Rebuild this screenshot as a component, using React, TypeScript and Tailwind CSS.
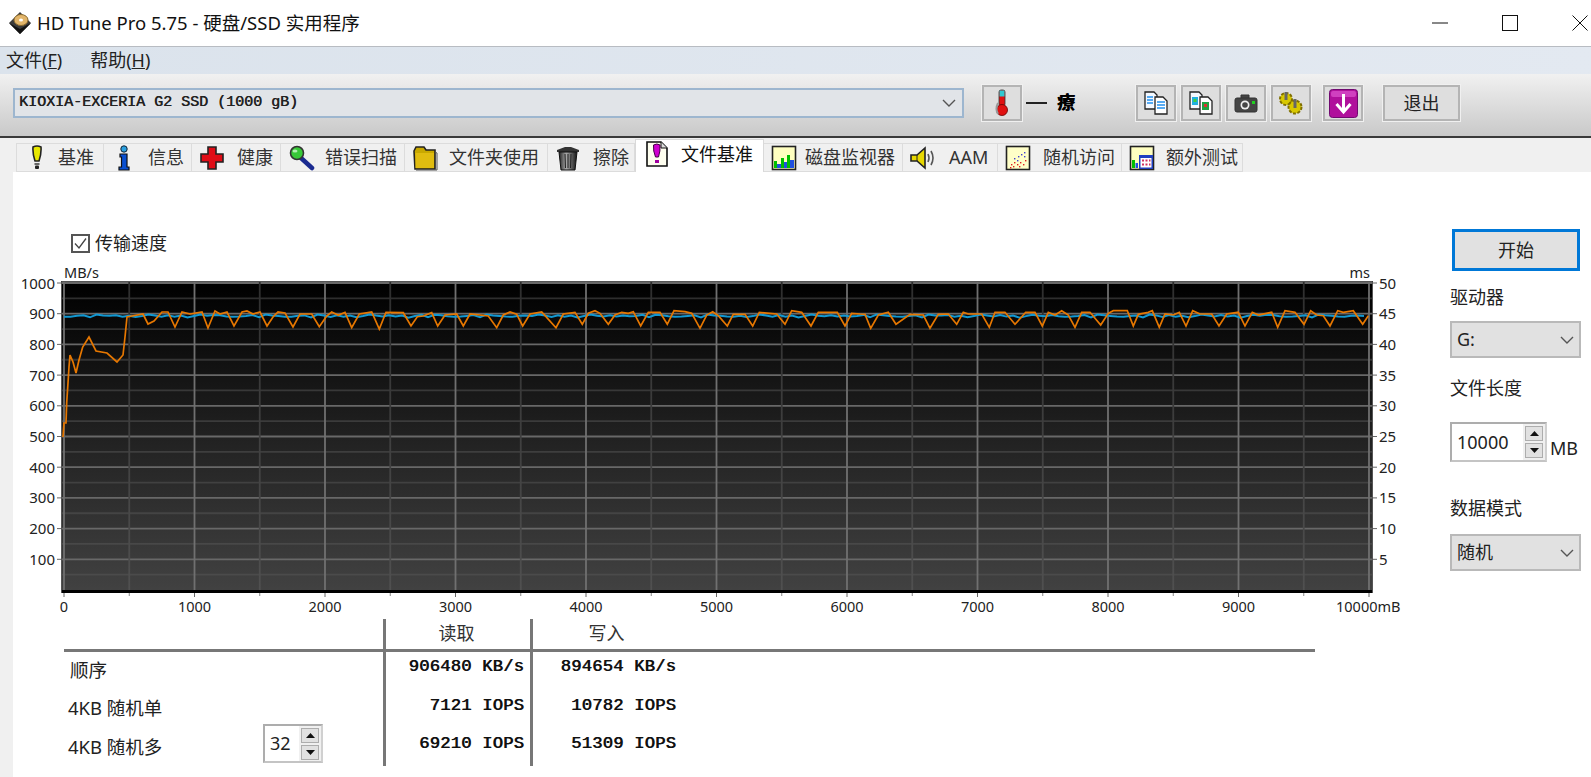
import React from "react";

const sans = "[font-family:'Noto_Sans','Noto_Sans_CJK_SC',sans-serif]";
const FONT = "'Noto Sans','Noto Sans CJK SC',sans-serif";

const Hdd = () => (
  <svg width="24" height="24" viewBox="0 0 24 24">
    <path d="M12 1 L23 12 L12 23 L1 12 Z" fill="#3a3a3a" />
    <path d="M1 12 L12 23 L23 12 L12 18 Z" fill="#111" />
    <ellipse cx="13" cy="9" rx="7" ry="5.5" fill="#e2b56a" stroke="#8a6a30" />
    <ellipse cx="13" cy="9" rx="2" ry="1.5" fill="#fff" />
  </svg>
);
const Bulb = () => (
  <svg width="24" height="26" viewBox="0 0 24 26">
    <path d="M8 2 Q12 0 16 2 Q16.5 9 14 16 L10 16 Q7.5 9 8 2 Z" fill="#e8e800" stroke="#222" strokeWidth="1.6" />
    <rect x="9.5" y="18" width="5" height="2" fill="#666" />
    <rect x="10" y="20.5" width="4" height="3.5" rx="1" fill="#222" />
  </svg>
);
const Info = () => (
  <svg width="24" height="26" viewBox="0 0 24 26">
    <circle cx="12" cy="4" r="3.2" fill="#2aa0e0" stroke="#123" strokeWidth="1" />
    <path d="M8 9 H15 V22 H17 V25 H7 V22 H9.5 V12 H8 Z" fill="#0a4fd0" stroke="#111" strokeWidth="1.2" />
  </svg>
);
const Cross = () => (
  <svg width="26" height="26" viewBox="0 0 26 26">
    <path d="M9 2 H17 V9 H24 V17 H17 V24 H9 V17 H2 V9 H9 Z" fill="#e00c16" stroke="#222" strokeWidth="1.6" />
  </svg>
);
const Lens = () => (
  <svg width="28" height="26" viewBox="0 0 28 26">
    <path d="M14 13 L25 23" stroke="#1a2a90" strokeWidth="4.5" strokeLinecap="round" />
    <circle cx="10" cy="8" r="6.5" fill="#38c838" stroke="#333" strokeWidth="1.6" />
    <ellipse cx="8" cy="6" rx="2.5" ry="1.6" fill="#b0f0b0" />
  </svg>
);
const Folder = () => (
  <svg width="26" height="26" viewBox="0 0 26 26">
    <path d="M2 6 L4 2 H12 L14 5 H23 V24 H3 Z" fill="#c8a800" stroke="#222" strokeWidth="1.6" />
    <rect x="3.5" y="8" width="18.5" height="15" fill="#e0bc10" />
    <path d="M23 7 L25 8 V25 L4 25" fill="none" stroke="#555" strokeWidth="1" />
  </svg>
);
const Trash = () => (
  <svg width="24" height="26" viewBox="0 0 24 26">
    <defs>
      <linearGradient id="tr" x1="0" x2="1">
        <stop offset="0" stopColor="#222" />
        <stop offset=".4" stopColor="#aaa" />
        <stop offset="1" stopColor="#111" />
      </linearGradient>
    </defs>
    <path d="M1 5 L9 2 H15 L23 5 V7 H1 Z" fill="#333" />
    <path d="M3 7 H21 L19 25 H5 Z" fill="url(#tr)" stroke="#111" />
    <path d="M9 9 L9.5 23 M12 9 V23 M15 9 L14.5 23" stroke="#222" strokeWidth="1" />
  </svg>
);
const FileBench = () => (
  <svg width="24" height="28" viewBox="0 0 24 28">
    <path d="M2 2 H16 L22 8 V26 H2 Z" fill="#fffff0" stroke="#111" strokeWidth="1.6" />
    <path d="M16 2 V8 H22" fill="#ddd" stroke="#111" strokeWidth="1" />
    <path d="M8.5 5 Q12 3 15 5 Q15.5 11 13.5 17 H10.5 Q8 11 8.5 5 Z" fill="#d000d0" stroke="#404" strokeWidth="1" />
    <rect x="10" y="20" width="4" height="3" fill="#a000a0" />
  </svg>
);
const ChartIcon = () => (
  <svg width="26" height="26" viewBox="0 0 26 26">
    <rect x="1.5" y="1.5" width="23" height="23" fill="#ffffc0" stroke="#222" strokeWidth="1.6" />
    <path d="M3 23 V16 H6 V23 Z M10 23 V13 H13 V23 Z M16 23 V10 H19 V23 Z" fill="#00c000" />
    <path d="M6 23 V19 H10 V23 Z M13 23 V17 H16 V23 Z M19 23 V15 H23 V23 Z" fill="#2050e0" />
  </svg>
);
const Speaker = () => (
  <svg width="26" height="24" viewBox="0 0 26 24">
    <path d="M1 9 H7 L15 2 V22 L7 15 H1 Z" fill="#e8d800" stroke="#222" strokeWidth="1.6" />
    <path d="M7 9 V15" stroke="#222" strokeWidth="1" />
    <path d="M18 8 Q20 12 18 16 M21 5 Q25 12 21 19" fill="none" stroke="#555" strokeWidth="1.6" />
  </svg>
);
const Scatter = () => {
  const red = [[6,19],[9,17],[12,19],[8,21],[15,17],[18,19],[20,15],[14,21],[5,22]];
  const blue = [[9,13],[13,11],[16,9],[19,7],[12,15],[19,11]];
  return (
    <svg width="26" height="26" viewBox="0 0 26 26">
      <rect x="1.5" y="1.5" width="23" height="23" fill="#ffffc8" stroke="#222" strokeWidth="1.6" />
      {red.map(([x, y], i) => <rect key={i} x={x} y={y} width="1.4" height="1.4" fill="#e02020" />)}
      {blue.map(([x, y], i) => <rect key={i} x={x} y={y} width="1.4" height="1.4" fill="#4040d0" />)}
    </svg>
  );
};
const Extra = () => (
  <svg width="26" height="26" viewBox="0 0 26 26">
    <rect x="1.5" y="1.5" width="23" height="23" fill="#ffffc0" stroke="#222" strokeWidth="1.6" />
    <path d="M3 23 V15 H6 V23 Z" fill="#00c000" />
    <path d="M6.5 23 V18 H9 V23 Z" fill="#2050e0" />
    <rect x="10" y="10" width="14" height="14" fill="#2040c0" />
    <rect x="11.5" y="13" width="11" height="9.5" fill="#fff" />
    <path d="M13 14.5 h2 v2 h-2 Z M16.5 14.5 h2 v2 h-2 Z M20 14.5 h1.5 v2 h-1.5 Z M13 18.5 h2 v2 h-2 Z M16.5 18.5 h2 v2 h-2 Z M20 18.5 h1.5 v2 h-1.5 Z" fill="#d03060" />
  </svg>
);

const Thermo = () => (
  <svg width="18" height="28" viewBox="0 0 18 28">
    <rect x="6" y="1" width="6" height="16" rx="2" fill="#e01010" stroke="#333" strokeWidth=".8" />
    <rect x="6.5" y="1.5" width="5" height="6" fill="#30c8d0" />
    <circle cx="9" cy="21" r="5.5" fill="#e01010" stroke="#600" strokeWidth=".8" />
    <path d="M5 14 Q2 20 5 25" stroke="#999" strokeWidth="2" fill="none" />
  </svg>
);
const Pages = ({ color }: { color?: boolean }) => (
  <svg width="26" height="24" viewBox="0 0 26 24">
    <path d="M2 1 H11 L14 4 V18 H2 Z" fill="#f4f8ff" stroke="#222" strokeWidth="1.3" />
    <path d="M12 6 H20 L24 10 V23 H12 Z" fill="#fff" stroke="#222" strokeWidth="1.3" />
    {color ? (
      <>
        <rect x="4" y="6" width="6" height="8" fill="#20b0e0" />
        <rect x="5.5" y="8" width="3" height="3" fill="#40d040" />
        <rect x="14" y="11" width="7" height="8" fill="#20a040" />
        <rect x="16" y="13" width="3" height="3" fill="#e03030" />
      </>
    ) : (
      <path d="M4 6 H10 M4 9 H10 M4 12 H10 M14 11 H22 M14 14 H22 M14 17 H22" stroke="#2090f0" strokeWidth="1.6" />
    )}
  </svg>
);
const Camera = () => (
  <svg width="24" height="20" viewBox="0 0 24 20">
    <path d="M7 5 V2 H15 V5 M1 7 Q1 5 3 5 H21 Q23 5 23 7 V17 Q23 19 21 19 H3 Q1 19 1 17 Z" fill="#444" stroke="#333" />
    <circle cx="11" cy="12" r="4.5" fill="#eee" />
    <circle cx="11" cy="12" r="2.8" fill="#444" />
    <rect x="18" y="8" width="3" height="3" fill="#20d020" />
  </svg>
);
const Gears = () => (
  <svg width="26" height="24" viewBox="0 0 26 24">
    <circle cx="8" cy="8" r="6" fill="#d8c800" stroke="#807000" strokeWidth="2" strokeDasharray="3 1.5" />
    <circle cx="17" cy="16" r="6.5" fill="#d8c800" stroke="#807000" strokeWidth="2" strokeDasharray="3 1.5" />
    <path d="M8 1 V9 M17 8 V17" stroke="#666" strokeWidth="3" />
  </svg>
);
const Download = () => (
  <svg width="29" height="29" viewBox="0 0 29 29">
    <rect x=".5" y=".5" width="28" height="28" rx="3" fill="#b0109c" stroke="#700a70" />
    <rect x="2" y="2" width="25" height="6" rx="2" fill="#d040c0" />
    <path d="M14.5 5 V22 M7.5 15 L14.5 23 L21.5 15" fill="none" stroke="#fff" strokeWidth="3" />
  </svg>
);

const Chevron = () => (
  <svg width="14" height="8" viewBox="0 0 14 8">
    <path d="M1 1 L7 7 L13 1" fill="none" stroke="#555" strokeWidth="1.4" />
  </svg>
);

const ToolBtn = ({ children, cls }: { children: React.ReactNode; cls: string }) => (
  <div className={`h-9 flex items-center justify-center bg-[#dedede] border-2 border-[#b4b4b4] shadow-[0_0_0_1px_#f0f0f0] ${cls}`}>
    {children}
  </div>
);

const tabs = [
  { label: "基准", w: "w-[88px]", ml: "ml-[1px]", icon: <Bulb /> },
  { label: "信息", w: "w-[88px]", ml: "ml-[4px]", icon: <Info /> },
  { label: "健康", w: "w-[89px]", ml: "ml-[5px]", icon: <Cross /> },
  { label: "错误扫描", w: "w-[124px]", ml: "ml-[4px]", icon: <Lens /> },
  { label: "文件夹使用", w: "w-[143px]", ml: "ml-[4px]", icon: <Folder /> },
  { label: "擦除", w: "w-[87px]", ml: "ml-[5px]", icon: <Trash /> },
  { label: "文件基准", w: "w-[129px]", ml: "ml-[3px]", icon: <FileBench />, active: true },
  { label: "磁盘监视器", w: "w-[139px]", ml: "ml-[1px]", icon: <ChartIcon /> },
  { label: "AAM", w: "w-[95px]", ml: "ml-[6px]", icon: <Speaker /> },
  { label: "随机访问", w: "w-[124px]", ml: "ml-[5px]", icon: <Scatter /> },
  { label: "额外测试", w: "w-[121px]", ml: "ml-[4px]", icon: <Extra /> },
];

const seg = (bx: number, by: number, s: number[][]) => s.map(([x, y]) => [bx + x / 3, by + y / 3]);

const orangePts = [
  ...[[63,437],[64,423],[66,423],[66.7,403],[68,383],[69,367],[70,355],[73,362],[76,373],[79,360],[82.7,347],[89,337],[96,351],[107,353],[117,362],[123,355],[125,337],[127,317],[143,314],[148,324],[154,321],[162,312],[168,312],[175,327],[182,312],[190,314],[202,312],[208,328],[215,311],[220,314],[227,312],[234,326],[242,312],[247,311],[253,314],[260,312],[267,326],[273,317],[278,312],[285,313],[293,327]],
  ...seg(300, 280, [[0,102],[35,102],[58,140],[80,108],[95,96],[115,106],[135,97],[155,143],[178,102],[215,96],[238,147],[258,97],[310,98],[333,138],[352,110],[370,108],[395,98],[413,138],[435,105],[470,102],[490,138],[510,102],[565,108],[590,143],[610,105],[630,96],[650,103],[668,138],[690,102],[725,96],[768,143],[790,102],[825,97],[847,133],[865,100],[885,92]]),
  ...seg(600, 295, [[0,55],[25,88],[45,60],[65,52],[85,55],[100,50],[122,93],[145,52],[180,52],[202,88],[222,47],[255,50],[275,55],[300,100],[320,60],[338,50],[355,62],[382,93],[400,58],[435,58],[458,93],[478,52],[530,57],[555,88],[575,47],[605,52],[633,93],[655,52],[712,52],[735,93],[755,55]]),
  ...seg(860, 295, [[0,57],[15,58],[32,100],[55,60],[85,52],[108,88],[150,58],[190,60],[210,100],[235,58],[265,57],[290,88],[310,52],[325,57],[365,57],[388,97],[405,52],[435,52],[465,88],[497,52],[525,52],[547,93],[565,52],[585,60],[605,47],[625,60],[645,97],[665,52],[690,52],[722,90],[745,55],[760,47]]),
  ...seg(1120, 295, [[0,47],[22,47],[40,93],[55,58],[85,52],[97,47],[118,97],[135,57],[160,60],[178,52],[198,93],[218,47],[240,57],[275,57],[297,93],[320,57],[355,52],[375,93],[397,52],[415,60],[455,52],[473,97],[495,47],[525,52],[552,88],[572,47],[590,60],[610,62],[630,93],[653,47],[670,52],[700,47],[728,88],[745,62]]),
];

const bluePts: number[][] = [];
for (let x = 64; x <= 1368; x += 6.5) {
  const w = Math.sin(x * 0.37) * 0.7 + Math.sin(x * 0.113) * 0.5 + (Math.sin(x * 0.71) > 0.75 ? 1.4 : 0);
  bluePts.push([x, 315.6 + w]);
}
const toPts = (p: number[][]) => p.map(([x, y]) => `${x.toFixed(1)},${y.toFixed(1)}`).join(" ");

const yAt = (i: number) => 283 + i * 30.7;
const xAt = (k: number) => 64 + k * 130.5;
const minorH = (i: number) => {
  const g = Math.round(46 + i * 3.2).toString(16);
  return `#${g}${g}${g}`;
};

const Chart = () => (
  <svg width="1437" height="356" viewBox="13 262 1437 356" className="block" fontFamily={FONT}>
    <defs>
      <linearGradient id="plot" x1="0" x2="0" y1="0" y2="1">
        <stop offset="0" stopColor="#000" />
        <stop offset="1" stopColor="#424242" />
      </linearGradient>
      <linearGradient id="minorV" gradientUnits="userSpaceOnUse" x1="0" x2="0" y1="282" y2="590">
        <stop offset="0" stopColor="#2e2e2e" />
        <stop offset="1" stopColor="#505050" />
      </linearGradient>
    </defs>
    <text x="64" y="278" fontSize="14.5" fill="#222">MB/s</text>
    <text x="1370" y="278" fontSize="14.5" fill="#222" textAnchor="end">ms</text>
    <rect x="61" y="281" width="1312" height="312" fill="url(#plot)" />
    {Array.from({ length: 10 }, (_, i) => (
      <g key={i}>
        <line x1="62" x2="1372" y1={yAt(i + 0.5)} y2={yAt(i + 0.5)} stroke={minorH(i)} strokeWidth="1.8" />
        <line x1="62" x2="1372" y1={yAt(i)} y2={yAt(i)} stroke="#686868" strokeWidth="1.8" />
        <line x1="57" x2="61" y1={yAt(i)} y2={yAt(i)} stroke="#666" />
        <line x1="1373" x2="1377" y1={yAt(i)} y2={yAt(i)} stroke="#666" />
        <text x="55" y={yAt(i) + 5.5} fontSize="15" fill="#222" textAnchor="end">{(10 - i) * 100}</text>
        <text x="1379" y={yAt(i) + 5.5} fontSize="15" fill="#222">{(10 - i) * 5}</text>
      </g>
    ))}
    {Array.from({ length: 11 }, (_, k) => (
      <g key={k}>
        {k < 10 && (
          <>
            <rect x={xAt(k + 0.5) - 0.9} y="282" width="1.8" height="308" fill="url(#minorV)" />
            <line x1={xAt(k + 0.5)} x2={xAt(k + 0.5)} y1="593" y2="596" stroke="#888" />
          </>
        )}
        <line x1={xAt(k)} x2={xAt(k)} y1="282" y2="590" stroke="#707070" strokeWidth="1.8" />
        <line x1={xAt(k)} x2={xAt(k)} y1="593" y2="597" stroke="#666" />
        {k < 10 ? (
          <text x={xAt(k)} y="612" fontSize="14.5" fill="#222" textAnchor="middle">{k * 1000}</text>
        ) : (
          <text x="1336" y="612" fontSize="14.5" fill="#222">10000mB</text>
        )}
      </g>
    ))}
    <rect x="61" y="590" width="1312" height="3" fill="#000" />
    <path d="M61.5 593 V281.5 H1372.5 V593" fill="none" stroke="#555" />
    <polyline points={toPts(bluePts)} fill="none" stroke="#1198d2" strokeWidth="2" />
    <polyline points={toPts(orangePts)} fill="none" stroke="#e67700" strokeWidth="1.7" />
  </svg>
);

const Spinner = ({ value, cls, inputCls }: { value: string; cls: string; inputCls: string }) => (
  <div className={`flex bg-white border-2 border-[#adadad] border-r-[#d0d0d0] border-b-[#c4c4c4] ${cls}`}>
    <div className={`flex items-center pl-[5px] text-[18px] text-[#222] ${inputCls}`}>{value}</div>
    <div className="flex-1 bg-[#f0f0f0] flex flex-col justify-center gap-[2px] px-[2px]">
      <div className="h-[15px] bg-[#e1e1e1] border border-[#adadad] flex items-center justify-center">
        <svg width="9" height="5" viewBox="0 0 9 5"><path d="M4.5 0 L9 5 H0 Z" fill="#111" /></svg>
      </div>
      <div className="h-[15px] bg-[#e1e1e1] border border-[#adadad] flex items-center justify-center">
        <svg width="9" height="5" viewBox="0 0 9 5"><path d="M0 0 H9 L4.5 5 Z" fill="#111" /></svg>
      </div>
    </div>
  </div>
);

const Select = ({ label, cls }: { label: string; cls: string }) => (
  <div className={`h-[37px] bg-[#e1e1e1] border-2 border-[#b9b9b9] flex items-center justify-between pl-[5px] pr-[5px] text-[18px] text-[#222] ${cls}`}>
    <span>{label}</span>
    <Chevron />
  </div>
);

const mono = "[font-family:'Liberation_Mono',monospace] text-[17px] tracking-[0.3px] text-[#111] leading-6 [text-shadow:0.7px_0_0_#111]";

const rows = [
  { label: "顺序", r: "906480 KB/s", w: "894654 KB/s", h: "h-[35px]", lp: "pt-[4px] pl-[6px]", dp: "pt-[3px]" },
  { label: "4KB 随机单", r: "7121 IOPS", w: "10782 IOPS", h: "h-[37px]", lp: "pt-[7px] pl-[4px]", dp: "pt-[7px]" },
  { label: "4KB 随机多", r: "69210 IOPS", w: "51309 IOPS", h: "h-[42px]", lp: "pt-[9px] pl-[4px]", dp: "pt-[8px]", spin: true },
];

export default function App() {
  return (
    <div className={`w-[1591px] h-[777px] overflow-hidden bg-white flex flex-col text-[#222] ${sans}`}>
      {/* title bar */}
      <div className="h-[46px] shrink-0 flex items-center pl-[8px] text-[18.5px] text-[#111]">
        <Hdd />
        <span className="ml-[5px]">HD Tune Pro 5.75 - 硬盘/SSD 实用程序</span>
        <div className="ml-auto mr-[3px] flex items-center gap-[54px]">
          <svg width="16" height="16" viewBox="0 0 16 16"><path d="M0 8 H16" stroke="#111" /></svg>
          <svg width="16" height="16" viewBox="0 0 16 16"><rect x=".5" y=".5" width="15" height="15" fill="none" stroke="#111" /></svg>
          <svg width="16" height="16" viewBox="0 0 16 16"><path d="M.5 .5 L15.5 15.5 M15.5 .5 L.5 15.5" stroke="#111" /></svg>
        </div>
      </div>
      {/* menu */}
      <div className="h-[28px] shrink-0 border-t border-[#b8bcc2] bg-gradient-to-r from-[#dbe3ec] to-[#e3e9f1] flex items-center pl-[6px] gap-[28px] text-[18px] text-[#222]">
        <span>文件(<span className="underline">F</span>)</span>
        <span>帮助(<span className="underline">H</span>)</span>
      </div>
      {/* toolbar */}
      <div className="h-[64px] shrink-0 border-b-2 border-[#3a3a3a] bg-gradient-to-b from-[#f1f1f1] to-[#c9c9c9] flex items-start pl-[13px] pt-[11px]">
        <div className="w-[951px] h-[30px] mt-[3px] bg-[#e1e4e8] border-2 border-[#9db6cf] flex items-center justify-between pl-[4px] pr-[6px]">
          <span className="[font-family:'Liberation_Mono',monospace] text-[15px] text-[#222] [text-shadow:0.5px_0_0_#222]">KIOXIA-EXCERIA G2 SSD (1000 gB)</span>
          <Chevron />
        </div>
        <ToolBtn cls="w-[40px] ml-[18px]"><Thermo /></ToolBtn>
        <div className="w-[21px] h-[2px] bg-[#222] ml-[4px] mt-[17px]" />
        <div className="ml-[10px] mt-[3px] w-[21px] text-[18px] font-bold leading-[28px] text-black [text-shadow:0.6px_0_0_#000]">療</div>
        <ToolBtn cls="w-[40px] ml-[58px]"><Pages /></ToolBtn>
        <ToolBtn cls="w-[40px] ml-[5px]"><Pages color /></ToolBtn>
        <ToolBtn cls="w-[40px] ml-[5px]"><Camera /></ToolBtn>
        <ToolBtn cls="w-[40px] ml-[5px]"><Gears /></ToolBtn>
        <ToolBtn cls="w-[40px] ml-[12px]"><Download /></ToolBtn>
        <ToolBtn cls="w-[77px] ml-[20px] text-[18px] text-[#222]">退出</ToolBtn>
      </div>
      {/* tabs */}
      <div className="h-[34px] shrink-0 bg-[#f0f0f0] flex items-end pl-[16px]">
        {tabs.map((t) =>
          t.active ? (
            <div key={t.label} className={`${t.w} h-[33px] shrink-0 bg-white border-x border-t border-[#d9d9d9] flex items-center text-[18px] text-[#111] relative z-10 pb-[4px]`}>
              <div className="w-[42px] flex justify-center shrink-0">{t.icon}</div>
              <span className={t.ml}>{t.label}</span>
            </div>
          ) : (
            <div key={t.label} className={`${t.w} h-[29px] shrink-0 border-r border-t border-b first:border-l border-[#dcdcdc] flex items-center text-[18px] text-[#333]`}>
              <div className="w-[40px] flex justify-center shrink-0">{t.icon}</div>
              <span className={t.ml}>{t.label}</span>
            </div>
          )
        )}
      </div>
      {/* content */}
      <div className="flex-1 bg-[#f0f0f0] pl-[13px] flex min-h-0">
        <div className="flex-1 bg-white flex">
          <div className="w-[1437px] shrink-0 flex flex-col pt-[62px]">
            <div className="h-[19px] flex items-center pl-[58px] text-[18px] text-[#222]">
              <svg width="19" height="19" viewBox="0 0 19 19">
                <rect x="1" y="1" width="17" height="17" fill="#fff" stroke="#555" strokeWidth="2" />
                <path d="M4 9.5 L8 14 L15 4.5" fill="none" stroke="#444" strokeWidth="1.3" />
              </svg>
              <span className="ml-[5px]">传输速度</span>
            </div>
            <div className="mt-[9px]"><Chart /></div>
            <div className="mt-[1px] ml-[51px] w-[1251px] flex flex-col">
              <div className="h-[33px] border-b-[3px] border-[#777] flex text-[18px] text-[#333] leading-[28px]">
                <div className="w-[319px]" />
                <div className="w-[147px] border-l-[3px] border-[#777] text-center pr-[3px]">读取</div>
                <div className="w-[150px] border-l-[3px] border-[#777] text-center">写入</div>
              </div>
              {rows.map((r) => (
                <div key={r.label} className={`flex ${r.h}`}>
                  <div className={`w-[319px] flex items-start text-[18.5px] text-[#222] ${r.lp}`}>
                    <span className="w-[195px] shrink-0">{r.label}</span>
                    {r.spin && <Spinner value="32" cls="w-[60px] h-[39px] -mt-[9px]" inputCls="w-[34px]" />}
                  </div>
                  <div className={`w-[147px] border-l-[3px] border-[#777] text-right pr-[6px] whitespace-pre ${mono} ${r.dp}`}>{r.r}</div>
                  <div className={`w-[150px] border-l-[3px] border-[#777] text-right pr-[4px] whitespace-pre ${mono} ${r.dp}`}>{r.w}</div>
                </div>
              ))}
            </div>
          </div>
          <div className="w-[131px] shrink-0 flex flex-col pt-[57px]">
            <div className="ml-[2px] w-[128px] h-[42px] bg-[#e1e1e1] border-[3px] border-[#0078d7] flex items-center justify-center text-[18px] text-[#222]">开始</div>
            <div className="mt-[14px] h-6 leading-6 text-[18px]">驱动器</div>
            <Select label="G:" cls="mt-[12px]" />
            <div className="mt-[18px] h-6 leading-6 text-[18px]">文件长度</div>
            <div className="mt-[22px] flex items-end h-[40px]">
              <Spinner value="10000" cls="w-[97px] h-[40px]" inputCls="w-[71px]" />
              <span className="ml-[3px] text-[18px] leading-[28px]">MB</span>
            </div>
            <div className="mt-[34px] h-6 leading-6 text-[18px]">数据模式</div>
            <Select label="随机" cls="mt-[14px]" />
          </div>
        </div>
      </div>
    </div>
  );
}
